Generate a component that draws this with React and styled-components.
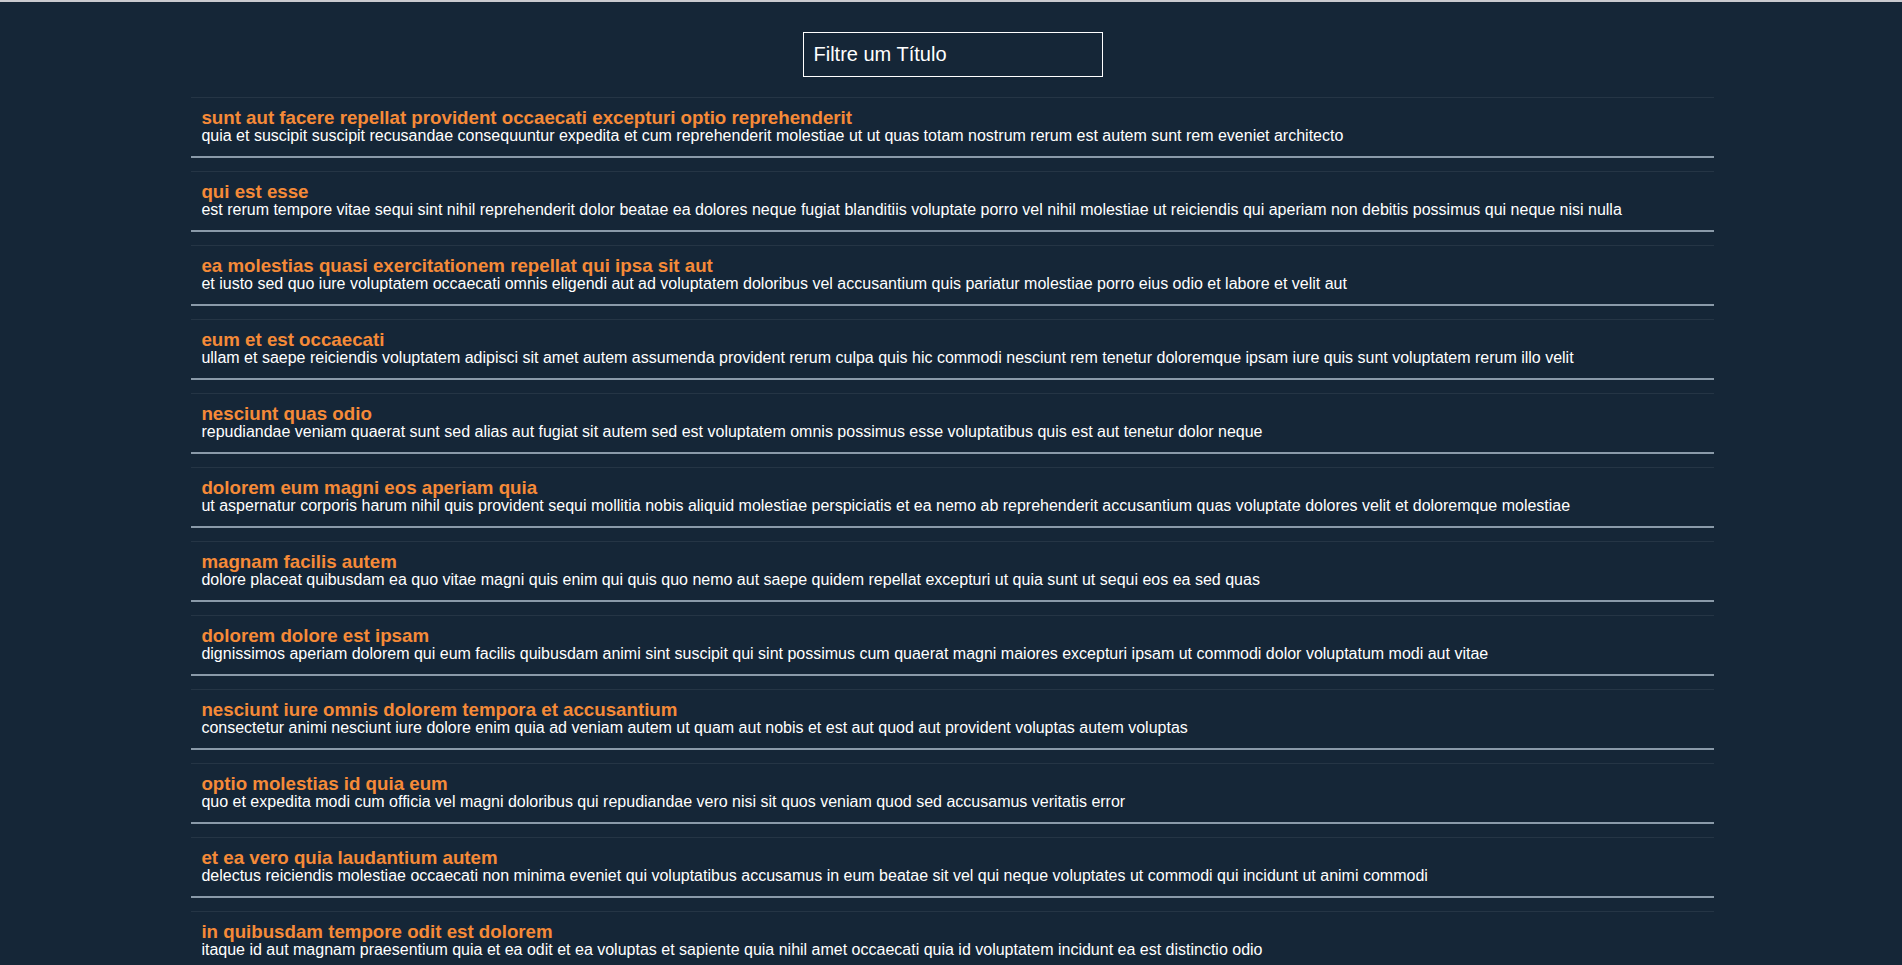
import styled, { createGlobalStyle } from 'styled-components'

const posts = [
  {
    id: 1,
    title: 'sunt aut facere repellat provident occaecati excepturi optio reprehenderit',
    body: 'quia et suscipit suscipit recusandae consequuntur expedita et cum reprehenderit molestiae ut ut quas totam nostrum rerum est autem sunt rem eveniet architecto',
  },
  {
    id: 2,
    title: 'qui est esse',
    body: 'est rerum tempore vitae sequi sint nihil reprehenderit dolor beatae ea dolores neque fugiat blanditiis voluptate porro vel nihil molestiae ut reiciendis qui aperiam non debitis possimus qui neque nisi nulla',
  },
  {
    id: 3,
    title: 'ea molestias quasi exercitationem repellat qui ipsa sit aut',
    body: 'et iusto sed quo iure voluptatem occaecati omnis eligendi aut ad voluptatem doloribus vel accusantium quis pariatur molestiae porro eius odio et labore et velit aut',
  },
  {
    id: 4,
    title: 'eum et est occaecati',
    body: 'ullam et saepe reiciendis voluptatem adipisci sit amet autem assumenda provident rerum culpa quis hic commodi nesciunt rem tenetur doloremque ipsam iure quis sunt voluptatem rerum illo velit',
  },
  {
    id: 5,
    title: 'nesciunt quas odio',
    body: 'repudiandae veniam quaerat sunt sed alias aut fugiat sit autem sed est voluptatem omnis possimus esse voluptatibus quis est aut tenetur dolor neque',
  },
  {
    id: 6,
    title: 'dolorem eum magni eos aperiam quia',
    body: 'ut aspernatur corporis harum nihil quis provident sequi mollitia nobis aliquid molestiae perspiciatis et ea nemo ab reprehenderit accusantium quas voluptate dolores velit et doloremque molestiae',
  },
  {
    id: 7,
    title: 'magnam facilis autem',
    body: 'dolore placeat quibusdam ea quo vitae magni quis enim qui quis quo nemo aut saepe quidem repellat excepturi ut quia sunt ut sequi eos ea sed quas',
  },
  {
    id: 8,
    title: 'dolorem dolore est ipsam',
    body: 'dignissimos aperiam dolorem qui eum facilis quibusdam animi sint suscipit qui sint possimus cum quaerat magni maiores excepturi ipsam ut commodi dolor voluptatum modi aut vitae',
  },
  {
    id: 9,
    title: 'nesciunt iure omnis dolorem tempora et accusantium',
    body: 'consectetur animi nesciunt iure dolore enim quia ad veniam autem ut quam aut nobis et est aut quod aut provident voluptas autem voluptas',
  },
  {
    id: 10,
    title: 'optio molestias id quia eum',
    body: 'quo et expedita modi cum officia vel magni doloribus qui repudiandae vero nisi sit quos veniam quod sed accusamus veritatis error',
  },
  {
    id: 11,
    title: 'et ea vero quia laudantium autem',
    body: 'delectus reiciendis molestiae occaecati non minima eveniet qui voluptatibus accusamus in eum beatae sit vel qui neque voluptates ut commodi qui incidunt ut animi commodi',
  },
  {
    id: 12,
    title: 'in quibusdam tempore odit est dolorem',
    body: 'itaque id aut magnam praesentium quia et ea odit et ea voluptas et sapiente quia nihil amet occaecati quia id voluptatem incidunt ea est distinctio odio',
  },
]

const GlobalStyle = createGlobalStyle`
  html {
    scrollbar-width: none;
  }
  html::-webkit-scrollbar {
    display: none;
  }
  body {
    margin: 0;
    background: #152637;
    border-top: 2px solid #c9cacf;
    font-family: 'Liberation Sans', Arial, Helvetica, sans-serif;
    color: #ffffff;
  }
`

const Page = styled.main`
  display: flex;
  flex-direction: column;
  align-items: center;
  padding: 30px 0 0 3px;
`

const Search = styled.input`
  box-sizing: border-box;
  width: 300px;
  height: 45px;
  padding: 0 10px;
  border: 1px solid #ffffff;
  background: transparent;
  color: #ffffff;
  font-family: inherit;
  font-size: 20px;
  outline: none;

  &::placeholder {
    color: #ffffff;
    opacity: 1;
  }
`

const List = styled.ul`
  list-style: none;
  margin: 20px 0 0;
  padding: 0;
  width: calc(80% + 3px);
`

const Item = styled.li`
  padding: 10px 10px 12px;
  border-top: 1px solid rgba(255, 255, 255, 0.07);
  border-bottom: 2px solid #8a9aa9;
  margin-bottom: 13px;
`

const Title = styled.h3`
  margin: 0;
  font-size: 18.72px;
  font-weight: 700;
  line-height: 19px;
  color: #f58a38;
`

const Body = styled.p`
  margin: 0;
  font-size: 16px;
  line-height: 17px;
  color: #ffffff;
`

const App = () => {
  return (
    <>
      <GlobalStyle />
      <Page>
        <Search placeholder="Filtre um Título" />
        <List>
          {posts.map((post) => (
            <Item key={post.id}>
              <Title>{post.title}</Title>
              <Body>{post.body}</Body>
            </Item>
          ))}
        </List>
      </Page>
    </>
  )
}

export default App
